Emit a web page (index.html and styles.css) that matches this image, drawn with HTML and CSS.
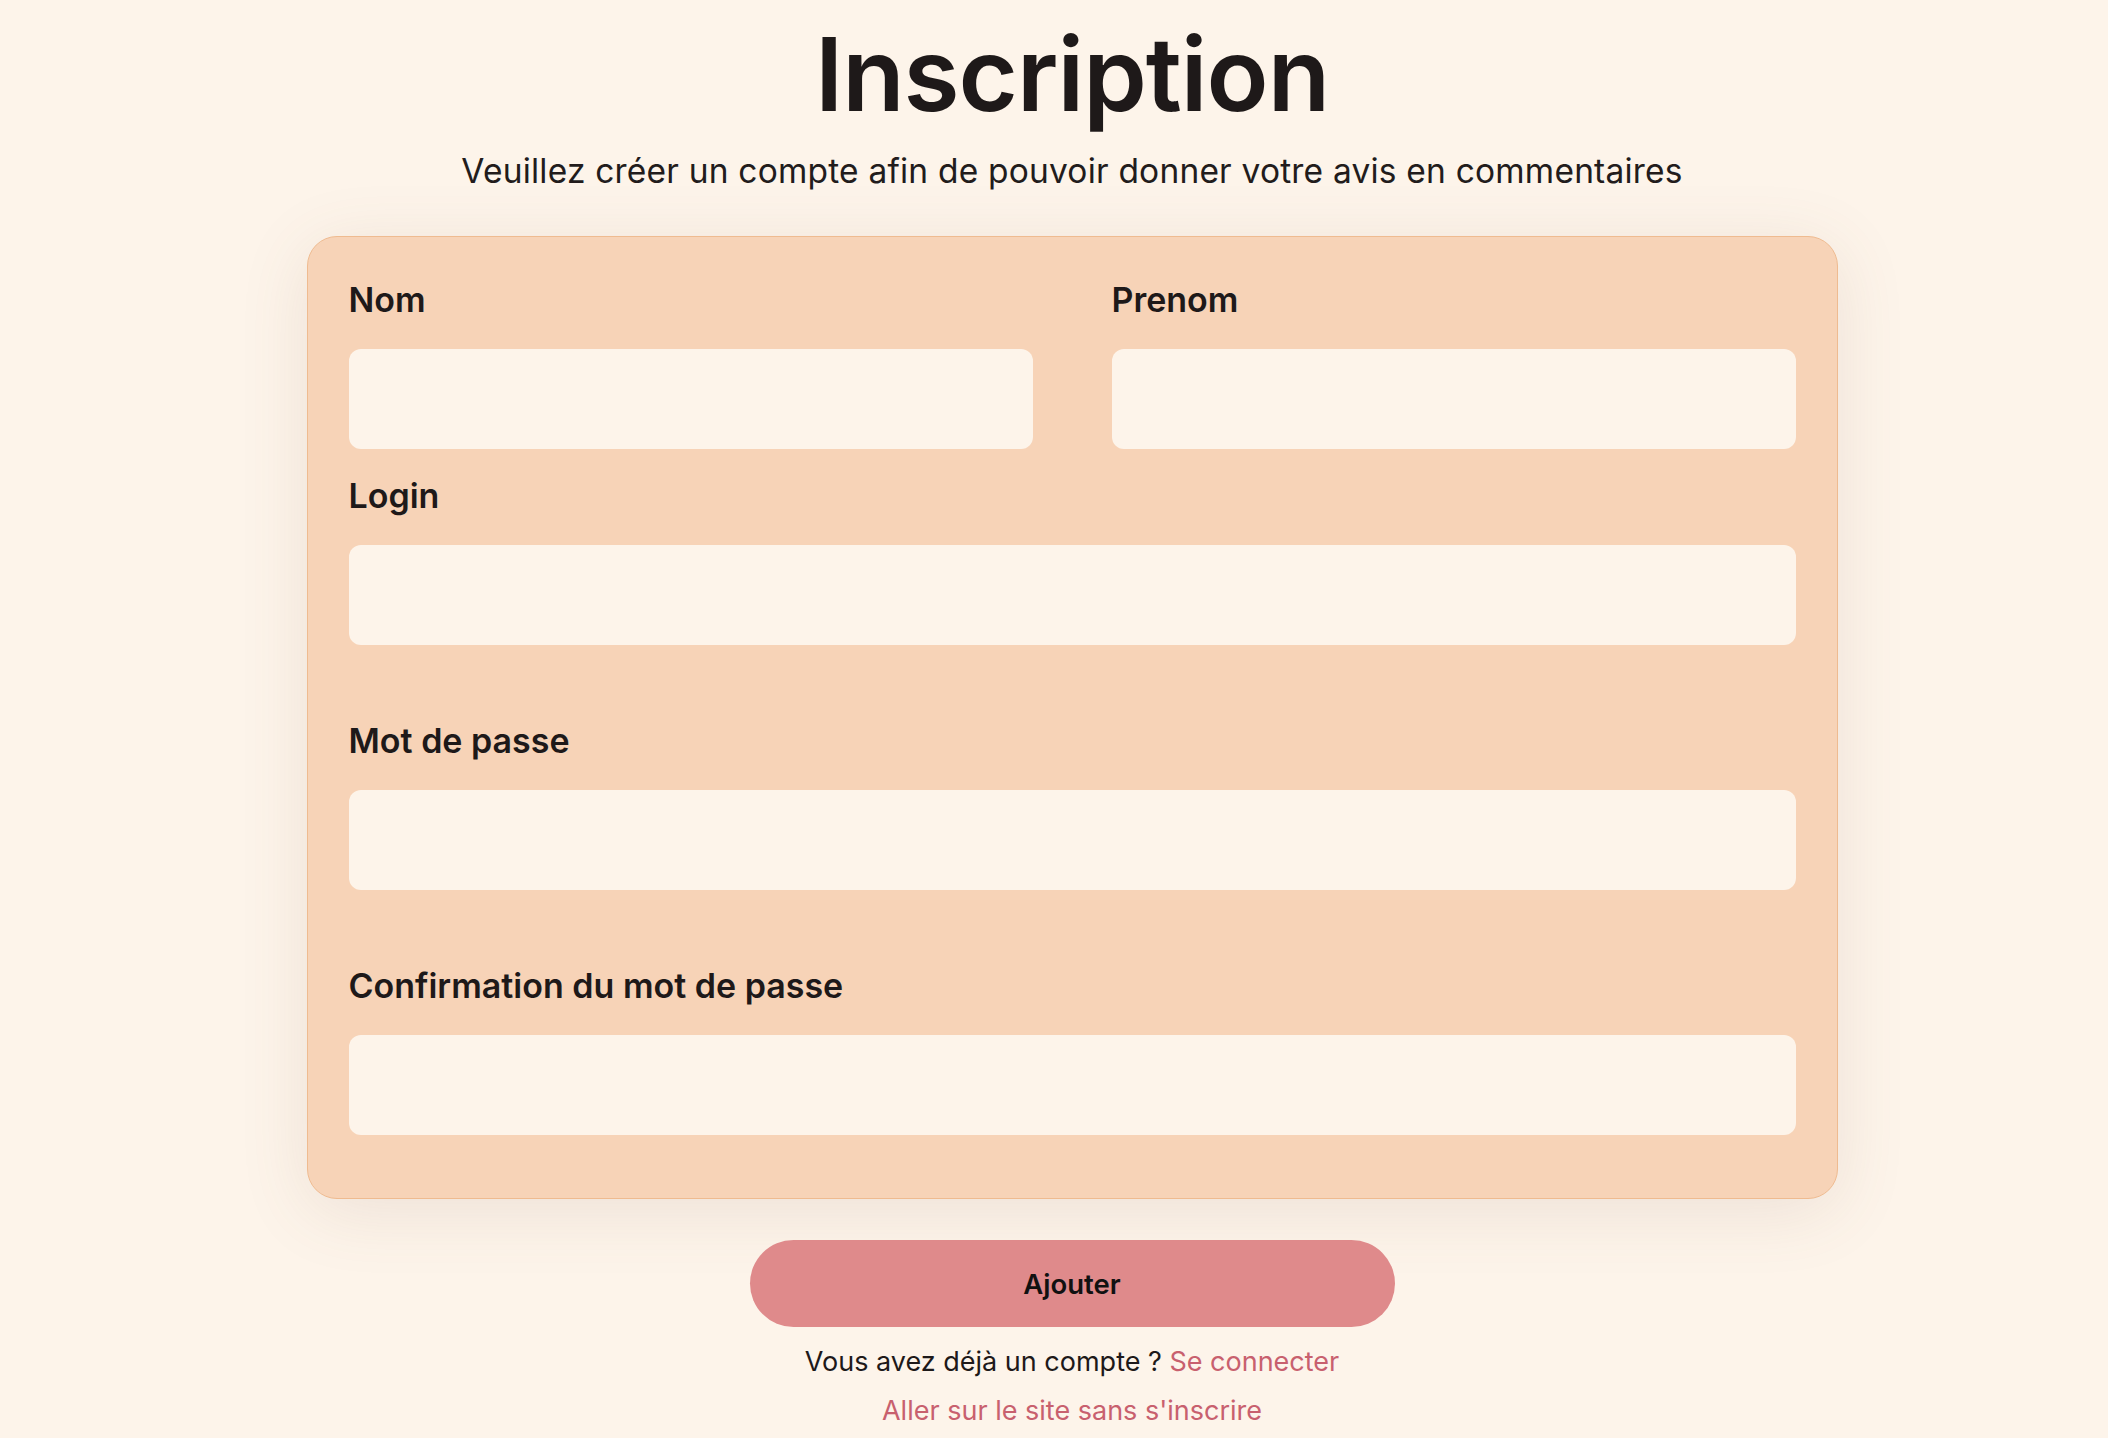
FILE: index.html
```html
<!DOCTYPE html>
<html lang="fr">
<head>
<meta charset="utf-8">
<title>Inscription</title>
<link rel="stylesheet" href="styles.css">
</head>
<body>
<main class="page">
  <h1 class="title">Inscription</h1>
  <p class="subtitle">Veuillez créer un compte afin de pouvoir donner votre avis en commentaires</p>
  <form class="card">
    <div class="group">
      <div class="row">
        <div class="field">
          <label class="label" for="nom">Nom</label>
          <input class="input" id="nom" type="text">
        </div>
        <div class="field">
          <label class="label" for="prenom">Prenom</label>
          <input class="input" id="prenom" type="text">
        </div>
      </div>
      <div class="field">
        <label class="label" for="login">Login</label>
        <input class="input" id="login" type="text">
      </div>
    </div>
    <div class="field">
      <label class="label" for="mdp">Mot de passe</label>
      <input class="input" id="mdp" type="password">
    </div>
    <div class="field">
      <label class="label" for="mdp2">Confirmation du mot de passe</label>
      <input class="input" id="mdp2" type="password">
    </div>
  </form>
  <button class="btn" type="button">Ajouter</button>
  <p class="foot">Vous avez déjà un compte ? <a class="link" href="#">Se connecter</a></p>
  <p class="foot"><a class="link" href="#">Aller sur le site sans s'inscrire</a></p>
</main>
</body>
</html>
```

FILE: styles.css
```css
html, body {
  margin: 0;
  padding: 0;
  background: #fdf4ea;
}
body {
  font-family: "Inter", "Open Sans", "Liberation Sans", sans-serif;
  color: #1e1919;
}
.page {
  display: flex;
  flex-direction: column;
  align-items: center;
  padding-left: 36px;
  box-sizing: border-box;
  width: 100%;
}
.title {
  margin: 14px 0 0;
  font-size: 102px;
  font-weight: 600;
  line-height: 120px;
  letter-spacing: -1px;
}
.subtitle {
  margin: 17px 0 0;
  font-size: 33.5px;
  font-weight: 400;
  line-height: 40px;
  letter-spacing: 0.2px;
  color: #221c1c;
}
.card {
  margin-top: 45px;
  width: 1531px;
  box-sizing: border-box;
  padding: 43px 41px 63px;
  background: #f7d3b7;
  border: 1px solid #efbb90;
  border-radius: 30px;
  box-shadow: 0 12px 70px rgba(120, 90, 70, 0.12);
  display: flex;
  flex-direction: column;
  gap: 76px;
}
.group {
  display: flex;
  flex-direction: column;
  gap: 27px;
}
.row {
  display: grid;
  grid-template-columns: 1fr 1fr;
  column-gap: 79px;
}
.field {
  display: flex;
  flex-direction: column;
}
.label {
  font-size: 34px;
  font-weight: 600;
  line-height: 40px;
  margin-bottom: 29px;
  color: #1e1919;
}
.input {
  height: 100px;
  border: none;
  border-radius: 12px;
  background: #fdf4ea;
  box-sizing: border-box;
  width: 100%;
  outline: none;
  padding: 0 20px;
  font: inherit;
}
.btn {
  margin-top: 41px;
  width: 645px;
  height: 87px;
  border: none;
  border-radius: 44px;
  background: #df8a8b;
  color: #111;
  font-family: inherit;
  font-size: 27.5px;
  font-weight: 600;
}
.foot {
  margin: 0;
  font-size: 27px;
  line-height: 49px;
  color: #1e1919;
}
.btn + .foot {
  margin-top: 10px;
}
.link {
  color: #c8606e;
  text-decoration: none;
}
```
